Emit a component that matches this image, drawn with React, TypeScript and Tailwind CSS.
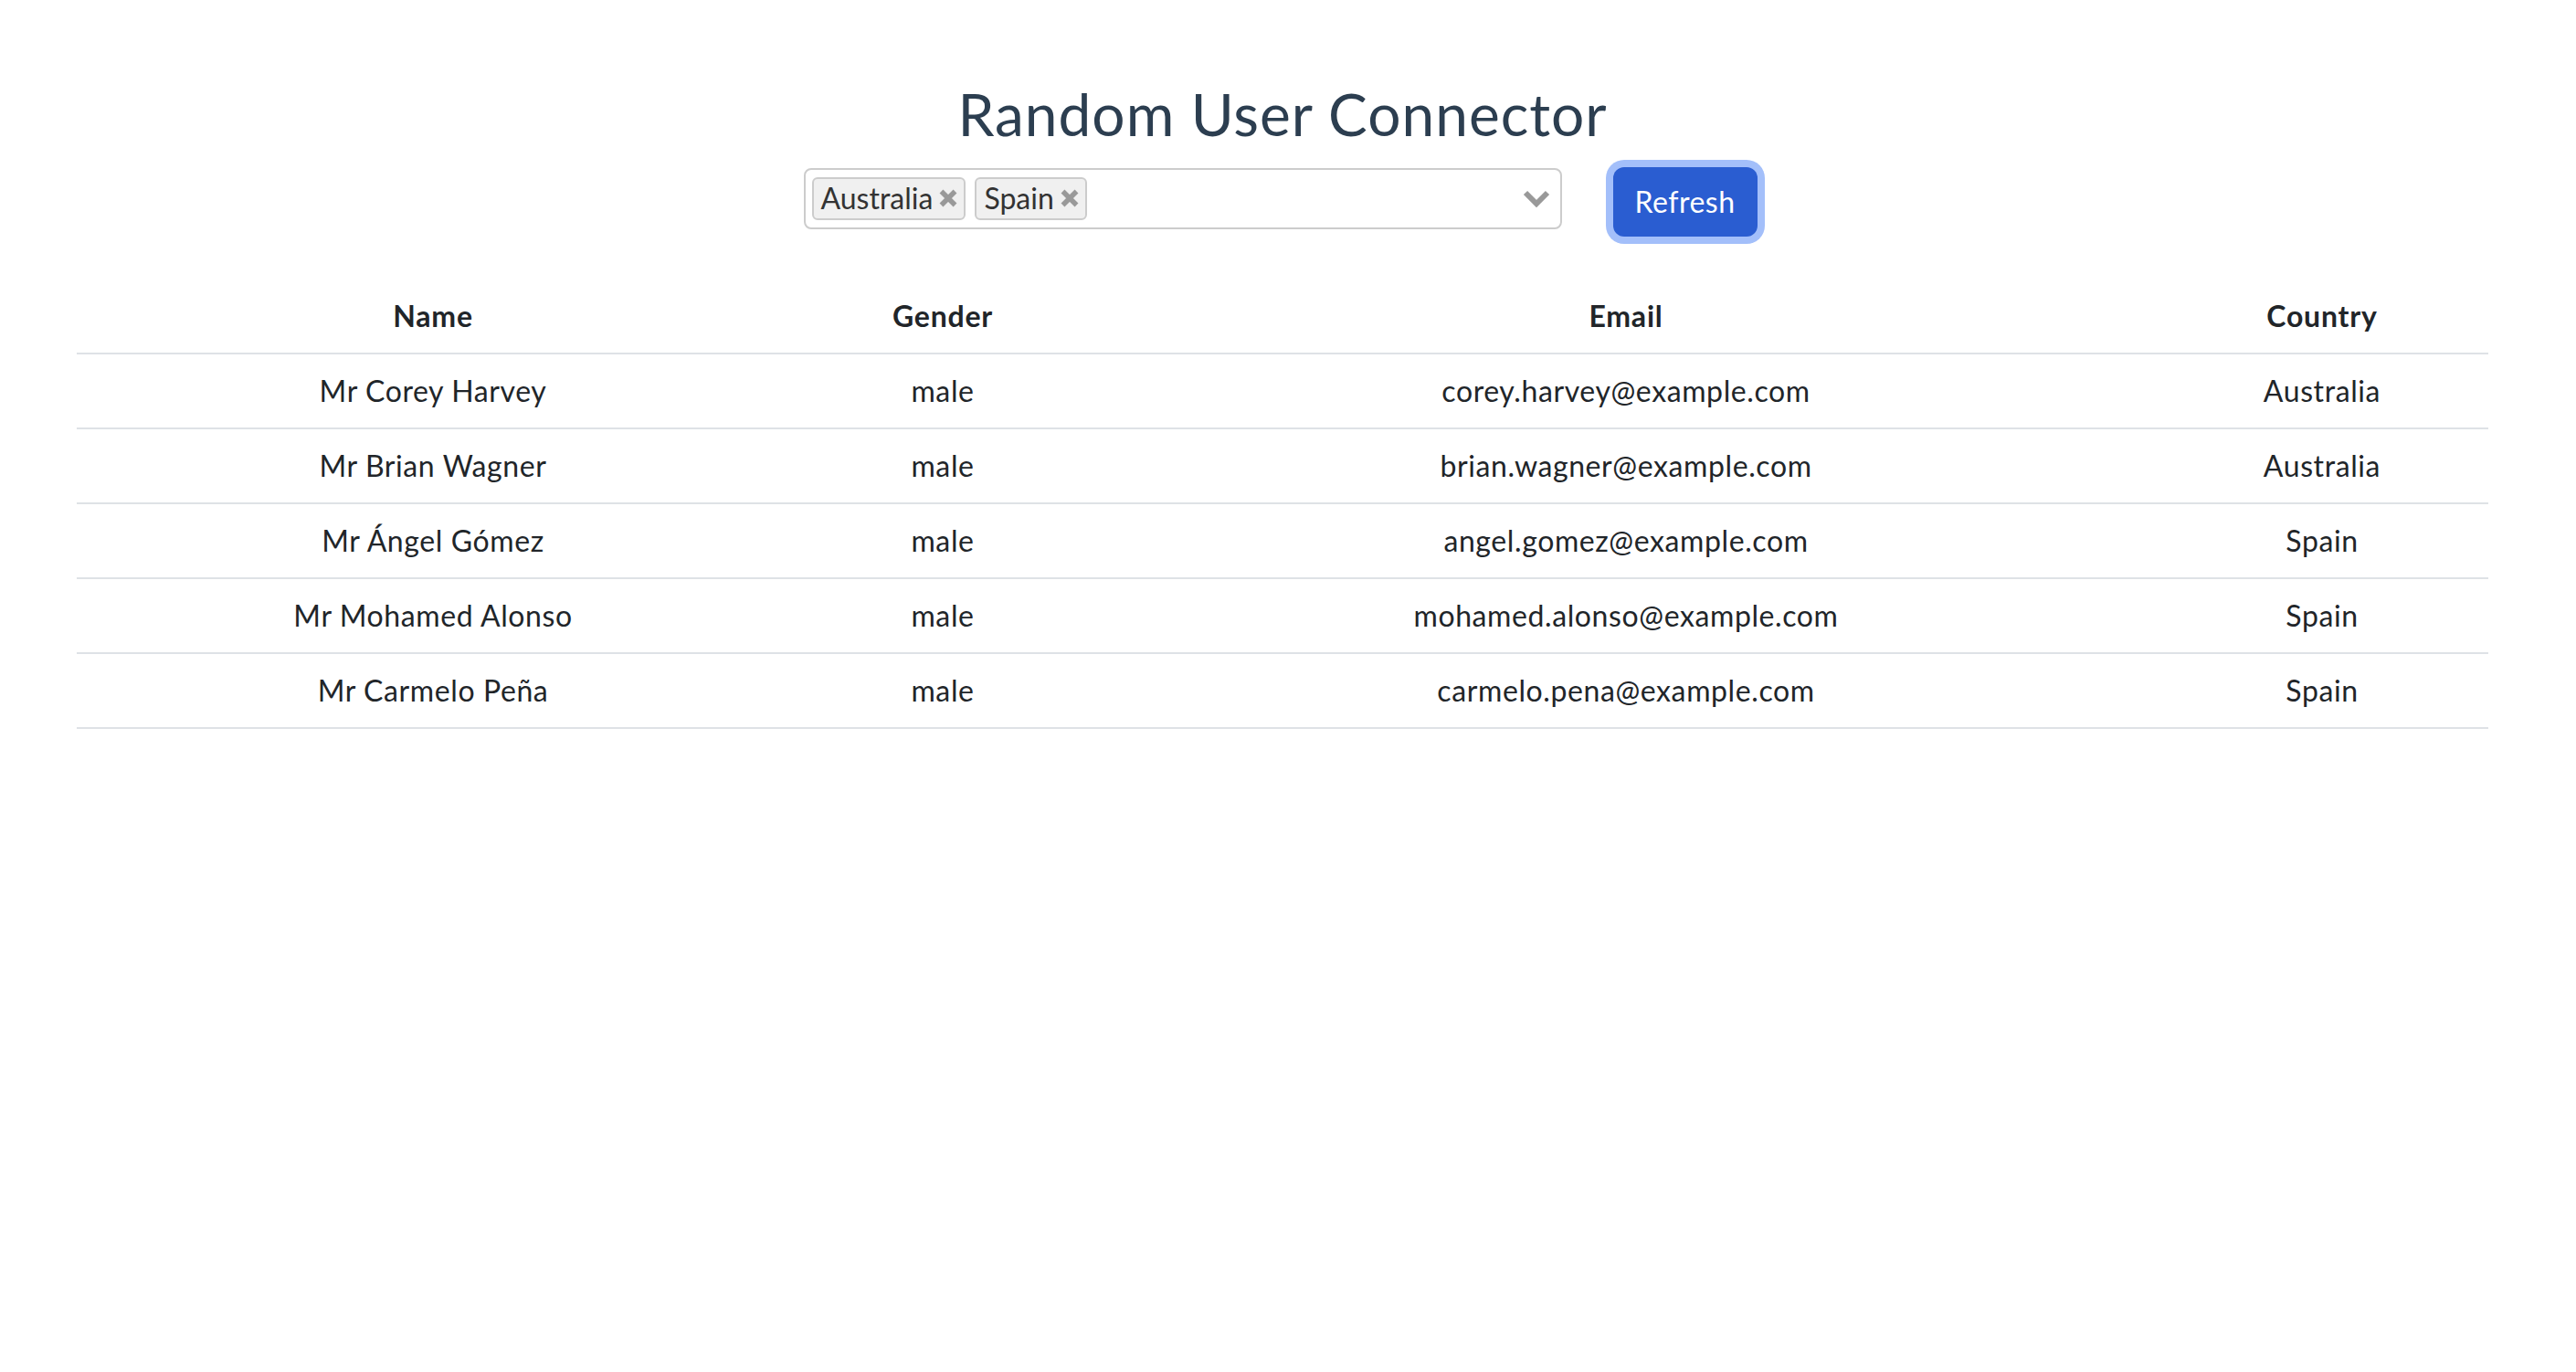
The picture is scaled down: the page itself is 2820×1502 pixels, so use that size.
import React from "react";

const rows = [
  { name: "Mr Corey Harvey", gender: "male", email: "corey.harvey@example.com", country: "Australia" },
  { name: "Mr Brian Wagner", gender: "male", email: "brian.wagner@example.com", country: "Australia" },
  { name: "Mr Ángel Gómez", gender: "male", email: "angel.gomez@example.com", country: "Spain" },
  { name: "Mr Mohamed Alonso", gender: "male", email: "mohamed.alonso@example.com", country: "Spain" },
  { name: "Mr Carmelo Peña", gender: "male", email: "carmelo.pena@example.com", country: "Spain" },
];

function XIcon() {
  return (
    <svg width="22" height="20" viewBox="0 0 22 20" className="shrink-0">
      <path d="M3.5 2.5 L18.5 17.5 M18.5 2.5 L3.5 17.5" stroke="#999" strokeWidth="5.5" strokeLinecap="butt" fill="none" />
    </svg>
  );
}

function Tag({ label }: { label: string }) {
  return (
    <div className="h-[47px] border-2 border-[#ccc] rounded-[6px] bg-[#f0f0f0] pl-[8px] pr-[6px] flex items-center gap-[6px] text-[32px] text-[#333] leading-none">
      <span>{label}</span>
      <XIcon />
    </div>
  );
}

export default function App() {
  return (
    <div className="w-[2808px] bg-white text-center font-[Lato,sans-serif]">
      <h1 className="m-0 pt-[87px] text-[64px] leading-[1.2] font-normal tracking-[1px] text-[#2c3e50]">Random User Connector</h1>
      <div className="mt-[20px] pr-[5px] flex justify-center items-start">
        <div className="w-[830px] h-[67px] border-2 border-[#ccc] rounded-[8px] flex items-center pl-[7px] pr-[11px] gap-[10px]">
          <Tag label="Australia" />
          <Tag label="Spain" />
          <svg width="30" height="20" viewBox="0 0 30 20" className="ml-auto">
            <path d="M3 4 L15 16 L27 4" stroke="#999" strokeWidth="6" fill="none" strokeLinejoin="miter" />
          </svg>
        </div>
        <button className="ml-[56px] -mt-[1px] w-[158px] h-[76px] rounded-[12px] bg-[#2a5dd1] text-white text-[32px] leading-none tracking-[0.5px] shadow-[0_0_0_8px_#a3bffa]">
          Refresh
        </button>
      </div>
      <div className="mt-[47px] mx-[84px]">
        <table className="w-[2640px] border-collapse text-[32px] text-[#212529]">
          <thead>
            <tr>
              <th className="w-[780px] py-[16px] leading-[48px] font-bold tracking-[0.8px] border-b-2 border-[#dee2e6]">Name</th>
              <th className="w-[336px] py-[16px] leading-[48px] font-bold tracking-[0.8px] border-b-2 border-[#dee2e6]">Gender</th>
              <th className="w-[1160px] py-[16px] leading-[48px] font-bold tracking-[0.8px] border-b-2 border-[#dee2e6]">Email</th>
              <th className="w-[364px] py-[16px] leading-[48px] font-bold tracking-[0.8px] border-b-2 border-[#dee2e6]">Country</th>
            </tr>
          </thead>
          <tbody className="tracking-[0.6px]">
            {rows.map((r) => (
              <tr key={r.email}>
                <td className="py-[16px] leading-[48px] border-b-2 border-[#dee2e6]">{r.name}</td>
                <td className="py-[16px] leading-[48px] border-b-2 border-[#dee2e6]">{r.gender}</td>
                <td className="py-[16px] leading-[48px] border-b-2 border-[#dee2e6]">{r.email}</td>
                <td className="py-[16px] leading-[48px] border-b-2 border-[#dee2e6]">{r.country}</td>
              </tr>
            ))}
          </tbody>
        </table>
      </div>
    </div>
  );
}
